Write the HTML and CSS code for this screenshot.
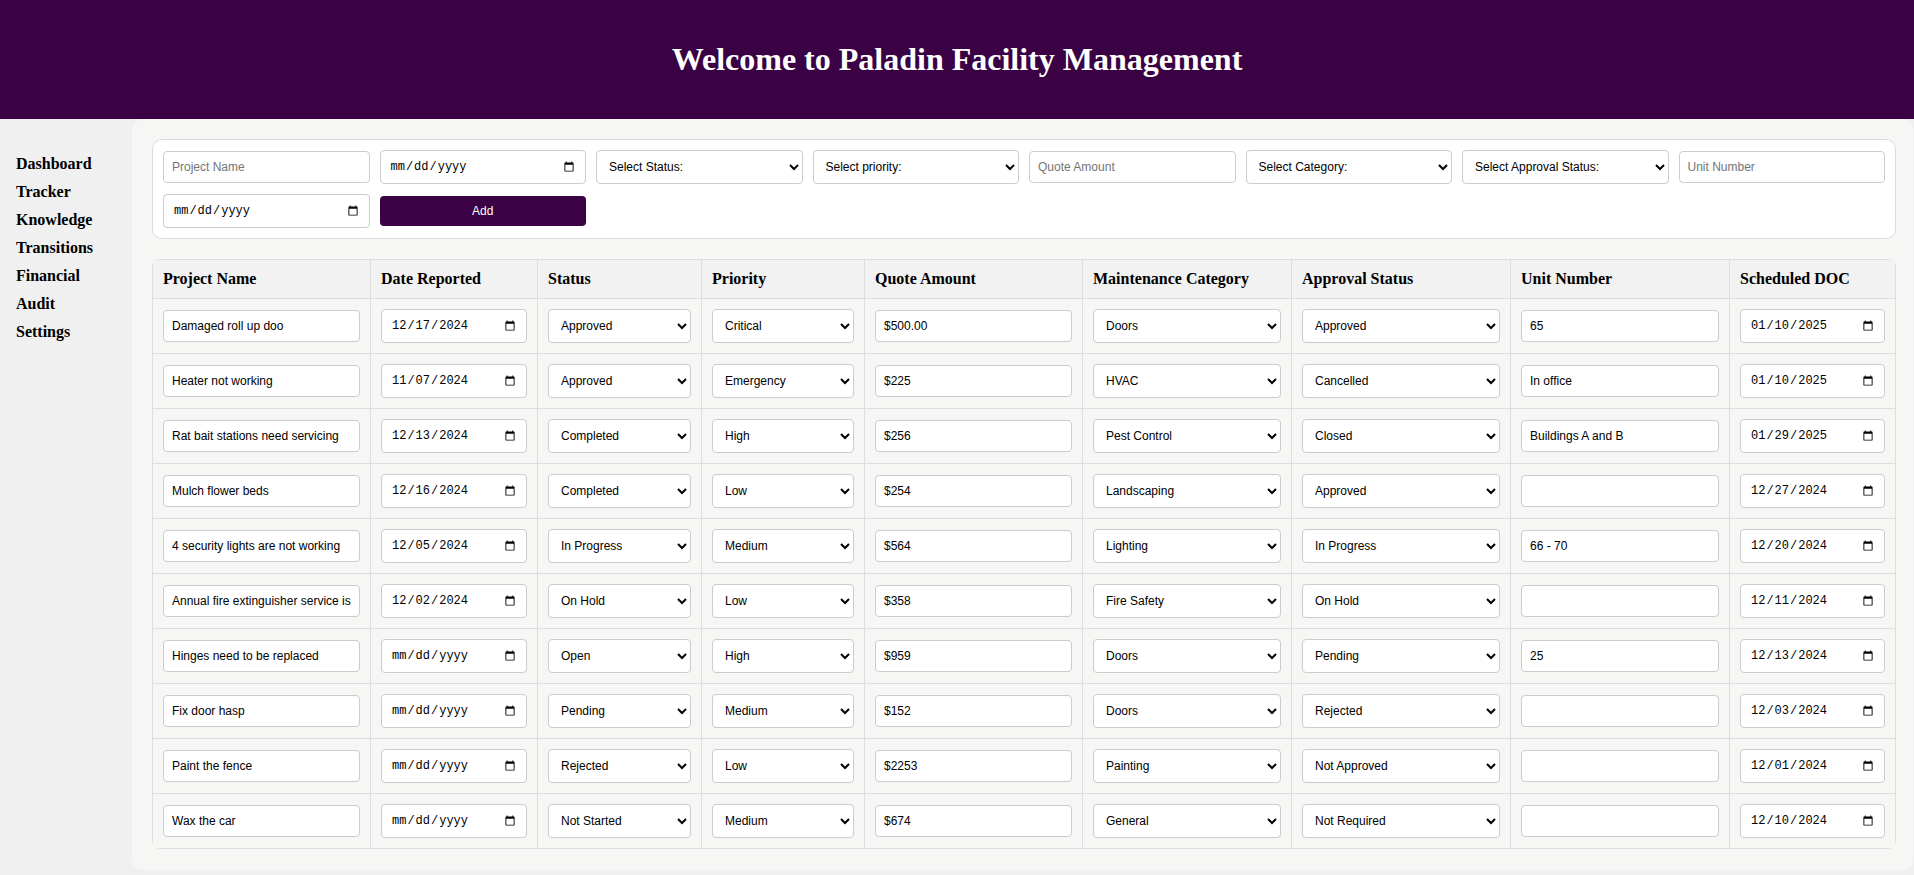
FILE: index.html
```html
<!DOCTYPE html>
<html lang="en">
<head>
<meta charset="utf-8">
<title>Paladin Facility Management</title>
<link rel="stylesheet" href="styles.css">
</head>
<body>
<header class="topbar">
  <h1 class="title">Welcome to Paladin Facility Management</h1>
</header>
<div class="layout">
  <nav class="sidebar">
    <ul class="nav-list">
      <li><a class="nav-link" href="#">Dashboard</a></li>
      <li><a class="nav-link" href="#">Tracker</a></li>
      <li><a class="nav-link" href="#">Knowledge</a></li>
      <li><a class="nav-link" href="#">Transitions</a></li>
      <li><a class="nav-link" href="#">Financial</a></li>
      <li><a class="nav-link" href="#">Audit</a></li>
      <li><a class="nav-link" href="#">Settings</a></li>
    </ul>
  </nav>
  <main class="panel">
    <form class="add-card">
      <input class="ctl text" type="text" placeholder="Project Name">
      <input class="ctl date" type="date">
      <select class="ctl sel"><option>Select Status:</option><option>Open</option><option>In Progress</option><option>Completed</option></select>
      <select class="ctl sel"><option>Select priority:</option><option>Low</option><option>Medium</option><option>High</option></select>
      <input class="ctl text" type="text" placeholder="Quote Amount">
      <select class="ctl sel"><option>Select Category:</option><option>Doors</option><option>HVAC</option></select>
      <select class="ctl sel"><option>Select Approval Status:</option><option>Approved</option><option>Pending</option></select>
      <input class="ctl text" type="text" placeholder="Unit Number">
      <input class="ctl date" type="date">
      <button class="add-btn" type="button">Add</button>
    </form>

    <div class="table-wrap">
      <table class="grid">
        <thead>
          <tr>
            <th class="w1">Project Name</th>
            <th class="w2">Date Reported</th>
            <th class="w3">Status</th>
            <th class="w4">Priority</th>
            <th class="w5">Quote Amount</th>
            <th class="w6">Maintenance Category</th>
            <th class="w7">Approval Status</th>
            <th class="w8">Unit Number</th>
            <th class="w9">Scheduled DOC</th>
          </tr>
        </thead>
        <tbody>
          <tr>
            <td><input class="ctl text cell" type="text" value="Damaged roll up doo"></td>
            <td><input class="ctl date" type="date" value="2024-12-17"></td>
            <td><select class="ctl sel"><option selected>Approved</option></select></td>
            <td><select class="ctl sel"><option selected>Critical</option></select></td>
            <td><input class="ctl text cell" type="text" value="$500.00"></td>
            <td><select class="ctl sel"><option selected>Doors</option></select></td>
            <td><select class="ctl sel"><option selected>Approved</option></select></td>
            <td><input class="ctl text cell" type="text" value="65"></td>
            <td><input class="ctl date" type="date" value="2025-01-10"></td>
          </tr>
          <tr>
            <td><input class="ctl text cell" type="text" value="Heater not working"></td>
            <td><input class="ctl date" type="date" value="2024-11-07"></td>
            <td><select class="ctl sel"><option selected>Approved</option></select></td>
            <td><select class="ctl sel"><option selected>Emergency</option></select></td>
            <td><input class="ctl text cell" type="text" value="$225"></td>
            <td><select class="ctl sel"><option selected>HVAC</option></select></td>
            <td><select class="ctl sel"><option selected>Cancelled</option></select></td>
            <td><input class="ctl text cell" type="text" value="In office"></td>
            <td><input class="ctl date" type="date" value="2025-01-10"></td>
          </tr>
          <tr>
            <td><input class="ctl text cell" type="text" value="Rat bait stations need servicing"></td>
            <td><input class="ctl date" type="date" value="2024-12-13"></td>
            <td><select class="ctl sel"><option selected>Completed</option></select></td>
            <td><select class="ctl sel"><option selected>High</option></select></td>
            <td><input class="ctl text cell" type="text" value="$256"></td>
            <td><select class="ctl sel"><option selected>Pest Control</option></select></td>
            <td><select class="ctl sel"><option selected>Closed</option></select></td>
            <td><input class="ctl text cell" type="text" value="Buildings A and B"></td>
            <td><input class="ctl date" type="date" value="2025-01-29"></td>
          </tr>
          <tr>
            <td><input class="ctl text cell" type="text" value="Mulch flower beds"></td>
            <td><input class="ctl date" type="date" value="2024-12-16"></td>
            <td><select class="ctl sel"><option selected>Completed</option></select></td>
            <td><select class="ctl sel"><option selected>Low</option></select></td>
            <td><input class="ctl text cell" type="text" value="$254"></td>
            <td><select class="ctl sel"><option selected>Landscaping</option></select></td>
            <td><select class="ctl sel"><option selected>Approved</option></select></td>
            <td><input class="ctl text cell" type="text" value=""></td>
            <td><input class="ctl date" type="date" value="2024-12-27"></td>
          </tr>
          <tr>
            <td><input class="ctl text cell" type="text" value="4 security lights are not working"></td>
            <td><input class="ctl date" type="date" value="2024-12-05"></td>
            <td><select class="ctl sel"><option selected>In Progress</option></select></td>
            <td><select class="ctl sel"><option selected>Medium</option></select></td>
            <td><input class="ctl text cell" type="text" value="$564"></td>
            <td><select class="ctl sel"><option selected>Lighting</option></select></td>
            <td><select class="ctl sel"><option selected>In Progress</option></select></td>
            <td><input class="ctl text cell" type="text" value="66 - 70"></td>
            <td><input class="ctl date" type="date" value="2024-12-20"></td>
          </tr>
          <tr>
            <td><input class="ctl text cell" type="text" value="Annual fire extinguisher service is due"></td>
            <td><input class="ctl date" type="date" value="2024-12-02"></td>
            <td><select class="ctl sel"><option selected>On Hold</option></select></td>
            <td><select class="ctl sel"><option selected>Low</option></select></td>
            <td><input class="ctl text cell" type="text" value="$358"></td>
            <td><select class="ctl sel"><option selected>Fire Safety</option></select></td>
            <td><select class="ctl sel"><option selected>On Hold</option></select></td>
            <td><input class="ctl text cell" type="text" value=""></td>
            <td><input class="ctl date" type="date" value="2024-12-11"></td>
          </tr>
          <tr>
            <td><input class="ctl text cell" type="text" value="Hinges need to be replaced"></td>
            <td><input class="ctl date" type="date"></td>
            <td><select class="ctl sel"><option selected>Open</option></select></td>
            <td><select class="ctl sel"><option selected>High</option></select></td>
            <td><input class="ctl text cell" type="text" value="$959"></td>
            <td><select class="ctl sel"><option selected>Doors</option></select></td>
            <td><select class="ctl sel"><option selected>Pending</option></select></td>
            <td><input class="ctl text cell" type="text" value="25"></td>
            <td><input class="ctl date" type="date" value="2024-12-13"></td>
          </tr>
          <tr>
            <td><input class="ctl text cell" type="text" value="Fix door hasp"></td>
            <td><input class="ctl date" type="date"></td>
            <td><select class="ctl sel"><option selected>Pending</option></select></td>
            <td><select class="ctl sel"><option selected>Medium</option></select></td>
            <td><input class="ctl text cell" type="text" value="$152"></td>
            <td><select class="ctl sel"><option selected>Doors</option></select></td>
            <td><select class="ctl sel"><option selected>Rejected</option></select></td>
            <td><input class="ctl text cell" type="text" value=""></td>
            <td><input class="ctl date" type="date" value="2024-12-03"></td>
          </tr>
          <tr>
            <td><input class="ctl text cell" type="text" value="Paint the fence"></td>
            <td><input class="ctl date" type="date"></td>
            <td><select class="ctl sel"><option selected>Rejected</option></select></td>
            <td><select class="ctl sel"><option selected>Low</option></select></td>
            <td><input class="ctl text cell" type="text" value="$2253"></td>
            <td><select class="ctl sel"><option selected>Painting</option></select></td>
            <td><select class="ctl sel"><option selected>Not Approved</option></select></td>
            <td><input class="ctl text cell" type="text" value=""></td>
            <td><input class="ctl date" type="date" value="2024-12-01"></td>
          </tr>
          <tr>
            <td><input class="ctl text cell" type="text" value="Wax the car"></td>
            <td><input class="ctl date" type="date"></td>
            <td><select class="ctl sel"><option selected>Not Started</option></select></td>
            <td><select class="ctl sel"><option selected>Medium</option></select></td>
            <td><input class="ctl text cell" type="text" value="$674"></td>
            <td><select class="ctl sel"><option selected>General</option></select></td>
            <td><select class="ctl sel"><option selected>Not Required</option></select></td>
            <td><input class="ctl text cell" type="text" value=""></td>
            <td><input class="ctl date" type="date" value="2024-12-10"></td>
          </tr>
        </tbody>
      </table>
    </div>
  </main>
</div>
</body>
</html>
```

FILE: styles.css
```css
* {
  box-sizing: border-box;
}

html, body {
  margin: 0;
  background: #f0f0f0;
  font-family: "Liberation Serif", "Times New Roman", serif;
  color: #000;
}

.topbar {
  background: #3a0245;
  padding: 20px;
  text-align: center;
}

.title {
  margin: 21px 0;
  font-size: 32px;
  line-height: 37px;
  font-weight: bold;
  color: #fff;
}

.layout {
  display: flex;
  align-items: flex-start;
}

.sidebar {
  width: 132px;
  flex: 0 0 132px;
  padding: 20px 16px;
}

.nav-list {
  list-style: none;
  margin: 16px 0 0;
  padding: 0;
}

.nav-list li {
  line-height: 18px;
  margin-bottom: 10px;
}

.nav-link {
  color: #000;
  text-decoration: none;
  font-weight: bold;
  font-size: 16px;
}

.panel {
  flex: 1;
  min-width: 0;
  margin-right: 1px;
  background: #f6f7f5;
  border-radius: 10px;
  padding: 20px 17px 21px 20px;
}

.add-card {
  background: #fff;
  border: 1px solid #dddddd;
  border-radius: 10px;
  padding: 10px;
  display: grid;
  grid-template-columns: repeat(8, 1fr);
  gap: 10px;
  align-items: center;
}

.ctl {
  display: block;
  width: 100%;
  margin: 0;
  font-family: "Liberation Sans", Arial, sans-serif;
  font-size: 12px;
  color: #000;
  background-color: #fff;
  border: 1px solid #cccccc;
  border-radius: 4px;
  padding: 8px;
}

.ctl.text {
  height: 32px;
}

.ctl.text::placeholder {
  color: #757575;
}

.ctl.text.cell {
  margin: 1px 0;
}

.ctl.sel {
  height: 34px;
}

.ctl.date {
  height: 34px;
  font-family: "Liberation Mono", "DejaVu Sans Mono", monospace;
  font-size: 12px;
  padding: 8px 8px 8px 9px;
}

.add-btn {
  display: block;
  width: 100%;
  height: 30px;
  border: 0;
  border-radius: 4px;
  background: #3a0245;
  color: #fff;
  font-family: "Liberation Sans", Arial, sans-serif;
  font-size: 12px;
  padding: 8px;
}

.table-wrap {
  margin-top: 20px;
  border-radius: 8px;
  overflow: hidden;
}

.grid {
  width: 100%;
  border-collapse: collapse;
  table-layout: fixed;
}

.grid th,
.grid td {
  border: 1px solid #dddddd;
  padding: 10px;
  text-align: left;
  vertical-align: middle;
}

.grid th {
  background: #f2f2f2;
  font-size: 16px;
  line-height: 18px;
  font-weight: bold;
  white-space: nowrap;
}

.w1 { width: 218px; }
.w2 { width: 167px; }
.w3 { width: 164px; }
.w4 { width: 163px; }
.w5 { width: 218px; }
.w6 { width: 209px; }
.w7 { width: 219px; }
.w8 { width: 219px; }
.w9 { width: 166px; }
```
